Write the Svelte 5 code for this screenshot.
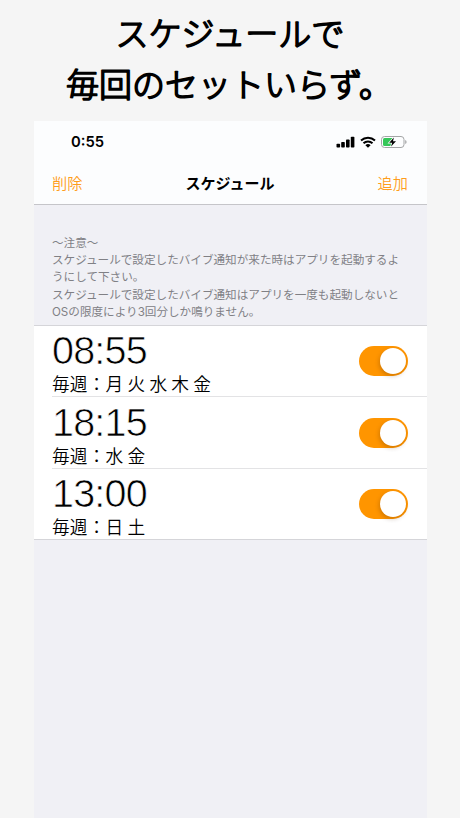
<script lang="ts">
  let schedules = $state([
    { time: "08:55", days: ["月", "火", "水", "木", "金"], enabled: true },
    { time: "18:15", days: ["水", "金"], enabled: true },
    { time: "13:00", days: ["日", "土"], enabled: true },
  ]);
</script>

<main>
  <h1>
    <!-- SVG text so that the thick outline gets round joins -->
    <svg width="460" height="121" viewBox="0 0 460 121">
      <text x="115.5" y="46">スケジュールで</text>
      <text x="66" y="96.5">毎回のセットいらず。</text>
    </svg>
  </h1>

  <div class="phone">
    <header>
      <div class="status-bar">
        <span class="clock">0:55</span>
        <div class="status-icons">
          <svg width="19" height="12" viewBox="0 0 19 12">
            <rect x="0.5" y="7.8" width="3.6" height="3.8" rx="0.8" />
            <rect x="5.2" y="5.9" width="3.6" height="5.7" rx="0.8" />
            <rect x="10" y="3.5" width="3.6" height="8.1" rx="0.8" />
            <rect x="14.8" y="0.7" width="3.6" height="10.9" rx="0.8" />
          </svg>
          <svg class="wifi" width="16" height="12" viewBox="0 0 16 12">
            <path d="M1 4.5a10.2 10.2 0 0 1 14 0" />
            <path d="M3.5 7.2a6.5 6.5 0 0 1 9 0" />
            <path class="dot" d="M5.4 9.2a3.9 3.9 0 0 1 5.2 0L8 11.8z" />
          </svg>
          <svg width="26" height="12" viewBox="0 0 26 12">
            <rect
              class="battery"
              x="0.5"
              y="0.5"
              width="22.5"
              height="11"
              rx="3"
            />
            <path class="battery-tip" d="M24.2 4v4q1.4-.6 1.4-2t-1.4-2z" />
            <path class="charge" d="M3.5 2H12v8H3.5Q2 10 2 8.5v-5Q2 2 3.5 2z" />
            <path class="bolt" d="M12.9 1.5 8.2 6.7h3L10 10.5 15 5.3H12z" />
          </svg>
        </div>
      </div>

      <nav>
        <button class="action" type="button">削除</button>
        <h2>スケジュール</h2>
        <button class="action" type="button">追加</button>
      </nav>
    </header>

    <p class="note">
      〜注意〜<br />
      スケジュールで設定したバイブ通知が来た時はアプリを起動するよ<br />
      うにして下さい。<br />
      スケジュールで設定したバイブ通知はアプリを一度も起動しないと<br />
      OSの限度により3回分しか鳴りません。
    </p>

    <ul>
      {#each schedules as schedule (schedule.time)}
        <li>
          <div class="row">
            <div>
              <div class="time">{schedule.time}</div>
              <div class="days">毎週：{schedule.days.join(" ")}</div>
            </div>
            <button
              class="switch"
              class:on={schedule.enabled}
              type="button"
              role="switch"
              aria-checked={schedule.enabled}
              aria-label={schedule.time}
              onclick={() => (schedule.enabled = !schedule.enabled)}
            >
              <span class="knob"></span>
            </button>
          </div>
        </li>
      {/each}
    </ul>
  </div>
</main>

<style>
  :global(body) {
    background: #f5f5f5;
  }

  main {
    box-sizing: border-box;
    color: #000;
    display: flex;
    flex-direction: column;
    font-family: "Liberation Sans", "Noto Sans CJK JP", sans-serif;
    height: 818px;
    overflow: hidden;
    width: 460px;
  }

  h1 {
    height: 121px;
    margin: 0;
  }

  h1 text {
    font-family: "Noto Sans CJK JP", sans-serif;
    font-size: 33px;
    font-weight: 300;
    stroke: #000;
    stroke-linecap: round;
    stroke-linejoin: round;
    stroke-width: 1.7px;
  }

  .phone {
    background: #f0f0f5;
    display: flex;
    flex: 1;
    flex-direction: column;
    margin-left: 34px;
    width: 393px;
  }

  header {
    background: #fcfdfe;
    border-bottom: 1px solid #c5c5c9;
    box-sizing: border-box;
    height: 84px;
  }

  .status-bar {
    align-items: center;
    display: flex;
    height: 42px;
    justify-content: space-between;
    padding: 0 20px 0 37px;
  }

  .clock {
    font-family: Inter, sans-serif;
    font-size: 14.8px;
    font-weight: 600;
  }

  .status-icons {
    align-items: center;
    display: flex;
    gap: 5px;
  }

  .wifi {
    fill: none;
    stroke: #000;
    stroke-width: 2;
  }

  .dot {
    fill: #000;
    stroke: none;
  }

  .battery {
    fill: none;
    stroke: #a3a5a6;
  }

  .battery-tip {
    fill: #a3a5a6;
  }

  .charge {
    fill: #35c759;
  }

  .bolt {
    paint-order: stroke;
    stroke: #fcfdfe;
    stroke-width: 1.5;
  }

  nav {
    align-items: center;
    display: flex;
    height: 40px;
    justify-content: space-between;
    padding: 0 19px 0 18px;
  }

  h2 {
    font-size: 15px;
    font-weight: 700;
    line-height: 20px;
    margin: 0;
    padding-top: 2px;
  }

  .action {
    background: none;
    border: 0;
    color: #ff9d1c;
    font-family: "Noto Sans CJK JP", sans-serif;
    font-size: 15.2px;
    font-weight: 350;
    line-height: 20px;
    padding: 0 0 2px;
  }

  .note {
    box-sizing: border-box;
    color: #808085;
    font-family: Inter, "Noto Sans CJK JP", sans-serif;
    font-size: 11.6px;
    font-weight: 400;
    height: 120px;
    line-height: 17.2px;
    margin: 0;
    padding: 30px 0 0 18px;
    white-space: nowrap;
  }

  ul {
    background: #fff;
    border-bottom: 1px solid #d5d5d9;
    border-top: 1px solid #d5d5d9;
    list-style: none;
    margin: 0;
    padding: 0;
  }

  li {
    padding-left: 18px;
  }

  .row {
    align-items: center;
    box-sizing: border-box;
    display: flex;
    height: 70.4px;
    justify-content: space-between;
    padding-right: 19px;
  }

  li + li .row {
    border-top: 1px solid #e3e3e5;
    height: 71.4px;
  }

  /* the white outline thins the digits */
  .time {
    -webkit-text-stroke: 0.7px #fff;
    font-family: "Liberation Sans", sans-serif;
    font-size: 39.5px;
    letter-spacing: -0.8px;
    line-height: 44px;
  }

  .days {
    font-family: "Noto Sans CJK JP", sans-serif;
    font-size: 17.7px;
    font-weight: 350;
    letter-spacing: 0.15px;
    line-height: 22px;
  }

  .switch {
    background: #e5e5e8;
    border: 0;
    border-radius: 15px;
    display: flex;
    height: 30px;
    padding: 2px;
    width: 49px;
  }

  .switch.on {
    background: #ff9500;
    justify-content: flex-end;
  }

  .knob {
    background: #fff;
    border-radius: 50%;
    box-shadow: -1px 2px 4px rgb(80 40 0 / 0.25);
    height: 26px;
    width: 26px;
  }
</style>
